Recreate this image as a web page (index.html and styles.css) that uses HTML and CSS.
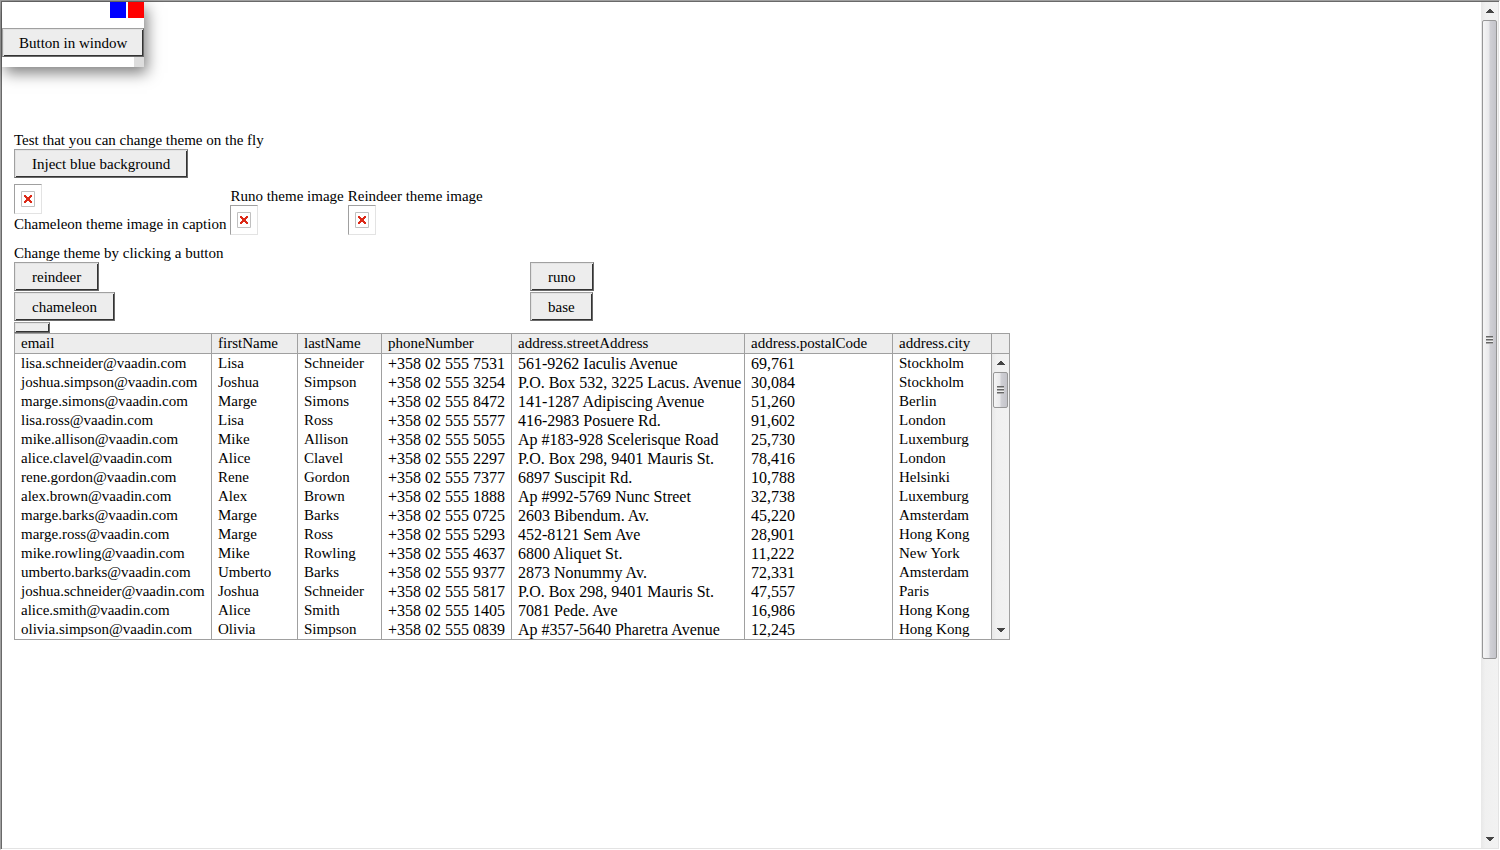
FILE: index.html
```
<!DOCTYPE html>
<html lang="en">
<head>
<meta charset="utf-8">
<title>Theme changer</title>
<link rel="stylesheet" href="styles.css">
</head>
<body>
<div class="app">
  <main class="view">
    <p class="caption">Test that you can change theme on the fly</p>
    <button class="button" type="button">Inject blue background</button>
    <div class="images">
      <figure class="picture picture-captioned">
        <span class="missing"><svg class="missing-icon" viewBox="0 0 14 16"><path class="missing-frame" d="M.5.5h13v15H.5z"/><path class="missing-cross" d="M3 4h2v1h1v1h2V5h1V4h2v2h-1v1H9v2h1v1h1v2H9v-1H8v-1H6v1H5v1H3v-2h1V9h1V7H4V6H3z"/></svg></span>
        <figcaption class="caption">Chameleon theme image in caption</figcaption>
      </figure>
      <figure class="picture">
        <figcaption class="caption">Runo theme image</figcaption>
        <span class="missing"><svg class="missing-icon" viewBox="0 0 14 16"><path class="missing-frame" d="M.5.5h13v15H.5z"/><path class="missing-cross" d="M3 4h2v1h1v1h2V5h1V4h2v2h-1v1H9v2h1v1h1v2H9v-1H8v-1H6v1H5v1H3v-2h1V9h1V7H4V6H3z"/></svg></span>
      </figure>
      <figure class="picture">
        <figcaption class="caption">Reindeer theme image</figcaption>
        <span class="missing"><svg class="missing-icon" viewBox="0 0 14 16"><path class="missing-frame" d="M.5.5h13v15H.5z"/><path class="missing-cross" d="M3 4h2v1h1v1h2V5h1V4h2v2h-1v1H9v2h1v1h1v2H9v-1H8v-1H6v1H5v1H3v-2h1V9h1V7H4V6H3z"/></svg></span>
      </figure>
    </div>
    <p class="caption">Change theme by clicking a button</p>
    <div class="themes">
      <button class="button" type="button">reindeer</button>
      <button class="button" type="button">runo</button>
      <button class="button" type="button">chameleon</button>
      <button class="button" type="button">base</button>
      <button class="button button-empty" type="button" aria-label="Empty"></button>
    </div>
    <div class="grid">
      <table class="people">
        <colgroup><col class="c-email"><col class="c-first"><col class="c-last"><col class="c-phone"><col class="c-street"><col class="c-postal"><col class="c-city"></colgroup>
        <thead>
          <tr><th>email</th><th>firstName</th><th>lastName</th><th>phoneNumber</th><th>address.streetAddress</th><th>address.postalCode</th><th>address.city</th></tr>
        </thead>
        <tbody>
          <tr><td>lisa.schneider@vaadin.com</td><td>Lisa</td><td>Schneider</td><td class="num">+358 02 555 7531</td><td class="num">561-9262 Iaculis Avenue</td><td class="num">69,761</td><td>Stockholm</td></tr>
          <tr><td>joshua.simpson@vaadin.com</td><td>Joshua</td><td>Simpson</td><td class="num">+358 02 555 3254</td><td class="num">P.O. Box 532, 3225 Lacus. Avenue</td><td class="num">30,084</td><td>Stockholm</td></tr>
          <tr><td>marge.simons@vaadin.com</td><td>Marge</td><td>Simons</td><td class="num">+358 02 555 8472</td><td class="num">141-1287 Adipiscing Avenue</td><td class="num">51,260</td><td>Berlin</td></tr>
          <tr><td>lisa.ross@vaadin.com</td><td>Lisa</td><td>Ross</td><td class="num">+358 02 555 5577</td><td class="num">416-2983 Posuere Rd.</td><td class="num">91,602</td><td>London</td></tr>
          <tr><td>mike.allison@vaadin.com</td><td>Mike</td><td>Allison</td><td class="num">+358 02 555 5055</td><td class="num">Ap #183-928 Scelerisque Road</td><td class="num">25,730</td><td>Luxemburg</td></tr>
          <tr><td>alice.clavel@vaadin.com</td><td>Alice</td><td>Clavel</td><td class="num">+358 02 555 2297</td><td class="num">P.O. Box 298, 9401 Mauris St.</td><td class="num">78,416</td><td>London</td></tr>
          <tr><td>rene.gordon@vaadin.com</td><td>Rene</td><td>Gordon</td><td class="num">+358 02 555 7377</td><td class="num">6897 Suscipit Rd.</td><td class="num">10,788</td><td>Helsinki</td></tr>
          <tr><td>alex.brown@vaadin.com</td><td>Alex</td><td>Brown</td><td class="num">+358 02 555 1888</td><td class="num">Ap #992-5769 Nunc Street</td><td class="num">32,738</td><td>Luxemburg</td></tr>
          <tr><td>marge.barks@vaadin.com</td><td>Marge</td><td>Barks</td><td class="num">+358 02 555 0725</td><td class="num">2603 Bibendum. Av.</td><td class="num">45,220</td><td>Amsterdam</td></tr>
          <tr><td>marge.ross@vaadin.com</td><td>Marge</td><td>Ross</td><td class="num">+358 02 555 5293</td><td class="num">452-8121 Sem Ave</td><td class="num">28,901</td><td>Hong Kong</td></tr>
          <tr><td>mike.rowling@vaadin.com</td><td>Mike</td><td>Rowling</td><td class="num">+358 02 555 4637</td><td class="num">6800 Aliquet St.</td><td class="num">11,222</td><td>New York</td></tr>
          <tr><td>umberto.barks@vaadin.com</td><td>Umberto</td><td>Barks</td><td class="num">+358 02 555 9377</td><td class="num">2873 Nonummy Av.</td><td class="num">72,331</td><td>Amsterdam</td></tr>
          <tr><td>joshua.schneider@vaadin.com</td><td>Joshua</td><td>Schneider</td><td class="num">+358 02 555 5817</td><td class="num">P.O. Box 298, 9401 Mauris St.</td><td class="num">47,557</td><td>Paris</td></tr>
          <tr><td>alice.smith@vaadin.com</td><td>Alice</td><td>Smith</td><td class="num">+358 02 555 1405</td><td class="num">7081 Pede. Ave</td><td class="num">16,986</td><td>Hong Kong</td></tr>
          <tr><td>olivia.simpson@vaadin.com</td><td>Olivia</td><td>Simpson</td><td class="num">+358 02 555 0839</td><td class="num">Ap #357-5640 Pharetra Avenue</td><td class="num">12,245</td><td>Hong Kong</td></tr>
        </tbody>
      </table>
      <div class="grid-side">
        <div class="grid-corner"></div>
        <div class="scrollbar">
          <button class="arrow" type="button" aria-label="Scroll table up"><svg class="arrow-icon" viewBox="0 0 8 4"><path d="M3 0h2v1h1v1h1v1h1v1H0V3h1V2h1V1h1z"/></svg></button>
          <div class="track track-table"><div class="thumb"><span class="grip"></span></div></div>
          <button class="arrow" type="button" aria-label="Scroll table down"><svg class="arrow-icon" viewBox="0 0 8 4"><path d="M0 0h8v1H7v1H6v1H5v1H3V3H2V2H1V1H0z"/></svg></button>
        </div>
      </div>
    </div>
  </main>
  <div class="scrollbar">
    <button class="arrow" type="button" aria-label="Scroll page up"><svg class="arrow-icon" viewBox="0 0 8 4"><path d="M3 0h2v1h1v1h1v1h1v1H0V3h1V2h1V1h1z"/></svg></button>
    <div class="track track-page"><div class="thumb"><span class="grip"></span></div></div>
    <button class="arrow" type="button" aria-label="Scroll page down"><svg class="arrow-icon" viewBox="0 0 8 4"><path d="M0 0h8v1H7v1H6v1H5v1H3V3H2V2H1V1H0z"/></svg></button>
  </div>
  <section class="window" aria-label="Window">
    <header class="window-header">
      <button class="window-max" type="button" aria-label="Maximize"></button>
      <button class="window-close" type="button" aria-label="Close"></button>
    </header>
    <button class="button window-button" type="button">Button in window</button>
    <footer class="window-footer"><span class="window-resize"></span></footer>
  </section>
</div>
</body>
</html>
```
FILE: styles.css
```
* { box-sizing: border-box; }

body {
  margin: 0;
  background: #fff;
  color: #000;
  font: 15px/18px "Liberation Serif", "Times New Roman", serif;
}

.app {
  position: relative;
  display: flex;
  min-height: 100vh;
  border: 1px solid #a0a0a0;
  border-right-color: #fff;
  border-bottom-color: #fff;
  box-shadow: inset 1px 1px #696969, inset -1px -1px #e3e3e3;
  padding: 1px;
}

.view {
  flex: 1;
  display: flex;
  flex-direction: column;
  align-items: flex-start;
  padding: 129px 12px 12px;
}

.caption { margin: 0; white-space: nowrap; }

.button {
  height: 29px;
  padding: 0 17px;
  border: 1px solid #696969;
  border-top-color: #a0a0a0;
  border-left-color: #a0a0a0;
  background: #ededed;
  box-shadow: inset 1px 1px #e3e3e3, inset -1px -1px #333;
  color: #000;
  font: inherit;
  white-space: nowrap;
}

.button-empty { height: 11px; }
.window-button { padding: 0 16px; }

.images { display: flex; align-items: flex-end; gap: 4px; margin: 6px 0 9px; }
.picture { margin: 0; display: flex; flex-direction: column; }
.picture-captioned { gap: 1px; padding-bottom: 2px; }

.missing {
  display: grid;
  place-items: center;
  width: 28px;
  height: 30px;
  border: 1px solid #e3e3e3;
  border-top-color: #a0a0a0;
  border-left-color: #a0a0a0;
}
.missing-icon { width: 14px; height: 16px; }
.missing-frame { fill: #fff; stroke: #c0c0c0; }
.missing-cross { fill: #dc2a18; }

.themes {
  display: grid;
  grid-template-columns: 516px auto;
  justify-items: start;
  row-gap: 1px;
}

.grid { display: flex; border: 1px solid #a0a0a0; }

.people { border-collapse: separate; border-spacing: 0; table-layout: fixed; width: 977px; }
.people th, .people td {
  padding: 0 6px;
  border-right: 1px solid #a0a0a0;
  font-weight: normal;
  text-align: left;
  white-space: nowrap;
  line-height: 19px;
}
.people .num { font-size: 16px; }
.people th { height: 20px; background: #ededed; border-bottom: 1px solid #a0a0a0; }
.c-email { width: 197px; }
.c-first { width: 86px; }
.c-last { width: 84px; }
.c-phone { width: 130px; }
.c-street { width: 233px; }
.c-postal { width: 148px; }
.c-city { width: 99px; }

.grid-side { display: flex; flex-direction: column; }
.grid-side .scrollbar { flex: 1; }
.grid-corner { height: 20px; background: #ededed; border-bottom: 1px solid #a0a0a0; }

.scrollbar {
  display: flex;
  flex-direction: column;
  width: 17px;
  background: linear-gradient(90deg, #e8e8e8, #f0f0f0 25%, #f2f2f2);
}
.arrow {
  display: grid;
  place-items: center;
  height: 18px;
  padding: 0;
  border: 0;
  background: none;
}
.arrow-icon { width: 8px; height: 4px; fill: #444; }

.track { flex: 1; display: grid; padding: 0 1px; }
.track-table { grid-template-rows: 36fr 214fr; }
.track-page { grid-template-rows: 639fr 171fr; }

.thumb {
  display: grid;
  place-items: center;
  border: 1px solid #979797;
  border-radius: 2px;
  background: linear-gradient(90deg, #f5f5f5, #e9e9eb 45%, #d0d0d5 55%, #c4c4ca);
}
.grip {
  width: 7px;
  height: 8px;
  background: repeating-linear-gradient(#666 0 1px, #aaa 1px 2px, #eee 2px 3px);
}

.window {
  position: absolute;
  top: 1px;
  left: 1px;
  display: flex;
  flex-direction: column;
  background: #fff;
  box-shadow: 3px 6px 14px rgba(0, 0, 0, 0.5);
}
.window-header { display: flex; justify-content: flex-end; gap: 2px; height: 26px; }
.window-max, .window-close { width: 16px; height: 16px; padding: 0; border: 0; }
.window-max { background: #00f; }
.window-close { background: #f00; }
.window-footer { display: flex; justify-content: flex-end; height: 10px; }
.window-resize { width: 10px; background: #ddd; }
```
